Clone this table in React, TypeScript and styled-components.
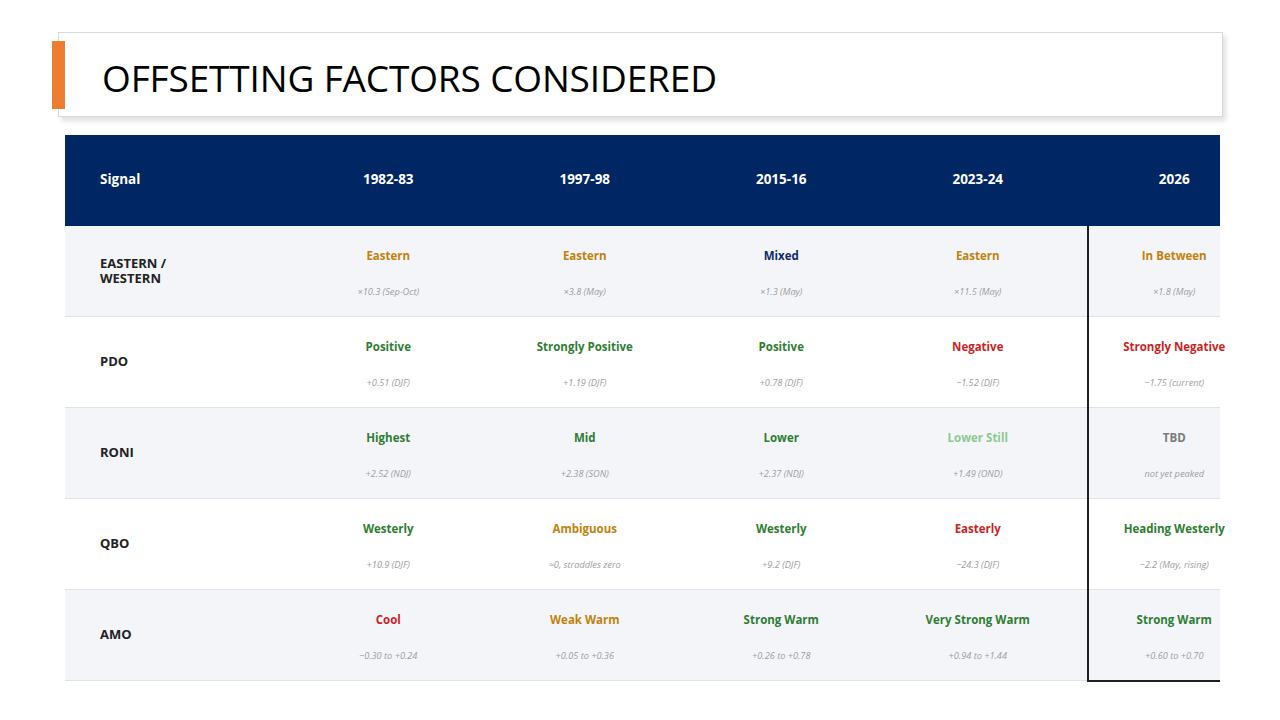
import React from "react";
import styled, { createGlobalStyle } from "styled-components";

const Global = createGlobalStyle`
  html, body { margin: 0; padding: 0; background: #ffffff; }
  body { font-family: "Open Sans", "Noto Sans", sans-serif; }
`;

const Slide = styled.div`
  width: 1280px;
  height: 720px;
  overflow: hidden;
  background: #ffffff;
  display: flex;
  flex-direction: column;
  padding-top: 32px;
  box-sizing: border-box;
`;

const TitleBox = styled.div`
  position: relative;
  margin-left: 58px;
  width: 1165px;
  height: 85px;
  box-sizing: border-box;
  border: 1px solid #d9d9d9;
  box-shadow: 3px 4px 5px rgba(0, 0, 0, 0.12);
  display: flex;
  align-items: center;
  padding-left: 43px;
  padding-top: 6px;
`;

const Accent = styled.div`
  position: absolute;
  left: -7px;
  top: 8px;
  width: 13px;
  height: 68px;
  background: #ed7d31;
`;

const Title = styled.h1`
  margin: 0;
  font-family: "Open Sans", sans-serif;
  font-weight: 400;
  font-size: 37px;
  letter-spacing: -0.15px;
  color: #000000;
`;

const TableWrap = styled.div`
  position: relative;
  margin-left: 65px;
  margin-top: 18px;
  width: 1155px;
`;

const HeaderRow = styled.div`
  width: 1155px;
  height: 91px;
  background: #002664;
  display: grid;
  grid-template-columns: 225px repeat(5, 196.5px);
  align-items: center;
`;

const HeadCell = styled.div<{ $left?: boolean }>`
  color: #ffffff;
  font-weight: 700;
  font-size: 13.5px;
  text-align: ${(p) => (p.$left ? "left" : "center")};
  padding-left: ${(p) => (p.$left ? "35px" : "0")};
  padding-bottom: 3px;
`;

const Row = styled.div<{ $shade: boolean }>`
  width: 1155px;
  height: 91px;
  box-sizing: border-box;
  background: ${(p) => (p.$shade ? "#f4f5f9" : "#ffffff")};
  border-bottom: 1px solid #e0e2e7;
  display: grid;
  grid-template-columns: 225px repeat(5, 196.5px);
`;

const Label = styled.div`
  display: flex;
  align-items: center;
  padding-left: 35px;
  font-weight: 700;
  font-size: 13px;
  line-height: 15.5px;
  color: #222222;
`;

const Cell = styled.div`
  display: flex;
  flex-direction: column;
  align-items: center;
  padding-top: 22px;
  white-space: nowrap;
`;

const Value = styled.div<{ $color: string }>`
  font-weight: 700;
  font-size: 11.5px;
  line-height: 16px;
  color: ${(p) => p.$color};
`;

const Sub = styled.div`
  margin-top: 22px;
  font-style: italic;
  font-size: 9.2px;
  line-height: 12px;
  color: #9d9d9d;
`;

const Highlight = styled.div`
  position: absolute;
  left: 1022px;
  top: 91px;
  width: 133px;
  height: 456px;
  box-sizing: border-box;
  border-left: 2px solid #1f1f1f;
  border-bottom: 2px solid #1f1f1f;
  pointer-events: none;
`;

const C = {
  gold: "#c2820b",
  green: "#2e7d32",
  red: "#cc1f24",
  navy: "#0f2a6b",
  pale: "#8cc98f",
  gray: "#7a7a7a",
};

type Entry = [string, string, string];

const years = ["1982-83", "1997-98", "2015-16", "2023-24", "2026"];

const rows: { label: string[]; cells: Entry[] }[] = [
  {
    label: ["EASTERN /", "WESTERN"],
    cells: [
      ["Eastern", C.gold, "×10.3 (Sep-Oct)"],
      ["Eastern", C.gold, "×3.8 (May)"],
      ["Mixed", C.navy, "×1.3 (May)"],
      ["Eastern", C.gold, "×11.5 (May)"],
      ["In Between", C.gold, "×1.8 (May)"],
    ],
  },
  {
    label: ["PDO"],
    cells: [
      ["Positive", C.green, "+0.51 (DJF)"],
      ["Strongly Positive", C.green, "+1.19 (DJF)"],
      ["Positive", C.green, "+0.78 (DJF)"],
      ["Negative", C.red, "−1.52 (DJF)"],
      ["Strongly Negative", C.red, "−1.75 (current)"],
    ],
  },
  {
    label: ["RONI"],
    cells: [
      ["Highest", C.green, "+2.52 (NDJ)"],
      ["Mid", C.green, "+2.38 (SON)"],
      ["Lower", C.green, "+2.37 (NDJ)"],
      ["Lower Still", C.pale, "+1.49 (OND)"],
      ["TBD", C.gray, "not yet peaked"],
    ],
  },
  {
    label: ["QBO"],
    cells: [
      ["Westerly", C.green, "+10.9 (DJF)"],
      ["Ambiguous", C.gold, "≈0, straddles zero"],
      ["Westerly", C.green, "+9.2 (DJF)"],
      ["Easterly", C.red, "−24.3 (DJF)"],
      ["Heading Westerly", C.green, "−2.2 (May, rising)"],
    ],
  },
  {
    label: ["AMO"],
    cells: [
      ["Cool", C.red, "−0.30 to +0.24"],
      ["Weak Warm", C.gold, "+0.05 to +0.36"],
      ["Strong Warm", C.green, "+0.26 to +0.78"],
      ["Very Strong Warm", C.green, "+0.94 to +1.44"],
      ["Strong Warm", C.green, "+0.60 to +0.70"],
    ],
  },
];

export default function App() {
  return (
    <>
      <Global />
      <Slide>
        <TitleBox>
          <Accent />
          <Title>OFFSETTING FACTORS CONSIDERED</Title>
        </TitleBox>
        <TableWrap>
          <HeaderRow>
            <HeadCell $left>Signal</HeadCell>
            {years.map((y) => (
              <HeadCell key={y}>{y}</HeadCell>
            ))}
          </HeaderRow>
          {rows.map((r, i) => (
            <Row key={r.label.join(" ")} $shade={i % 2 === 0}>
              <Label>
                <span>
                  {r.label.map((l, k) => (
                    <React.Fragment key={l}>
                      {k > 0 && <br />}
                      {l}
                    </React.Fragment>
                  ))}
                </span>
              </Label>
              {r.cells.map(([v, col, s], j) => (
                <Cell key={j}>
                  <Value $color={col}>{v}</Value>
                  <Sub>{s}</Sub>
                </Cell>
              ))}
            </Row>
          ))}
          <Highlight />
        </TableWrap>
      </Slide>
    </>
  );
}
